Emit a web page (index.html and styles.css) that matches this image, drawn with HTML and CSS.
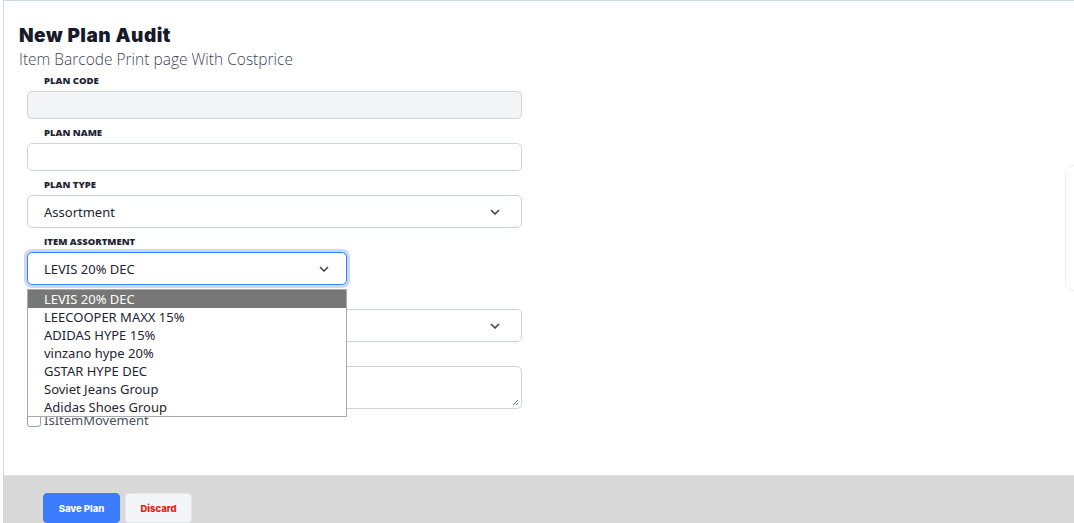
FILE: index.html
```html
<!DOCTYPE html>
<html>
<head>
<meta charset="utf-8">
<link rel="stylesheet" href="styles.css">
</head>
<body>
<div class="page">
  <div class="content">
    <h1 class="title">New Plan Audit</h1>
    <p class="subtitle">Item Barcode Print page With Costprice</p>
    <div class="form">
      <div class="field">
        <label class="label">PLAN CODE</label>
        <div class="input disabled"></div>
      </div>
      <div class="field">
        <label class="label">PLAN NAME</label>
        <div class="input"></div>
      </div>
      <div class="field">
        <label class="label">PLAN TYPE</label>
        <div class="select"><span>Assortment</span>
          <svg class="chev" width="10" height="6" viewBox="0 0 10 6"><path d="M1 1l4 4 4-4" fill="none" stroke="#374151" stroke-width="1.5"/></svg>
        </div>
      </div>
      <div class="field">
        <label class="label">ITEM ASSORTMENT</label>
        <div class="select focused"><span>LEVIS 20% DEC</span>
          <svg class="chev" width="10" height="6" viewBox="0 0 10 6"><path d="M1 1l4 4 4-4" fill="none" stroke="#374151" stroke-width="1.5"/></svg>
        </div>
        <ul class="dropdown">
          <li class="active">LEVIS 20% DEC</li>
          <li>LEECOOPER MAXX 15%</li>
          <li>ADIDAS HYPE 15%</li>
          <li>vinzano hype 20%</li>
          <li>GSTAR HYPE DEC</li>
          <li>Soviet Jeans Group</li>
          <li>Adidas Shoes Group</li>
        </ul>
      </div>
      <div class="field">
        <label class="label hidden-label"></label>
        <div class="select"><span></span>
          <svg class="chev" width="10" height="6" viewBox="0 0 10 6"><path d="M1 1l4 4 4-4" fill="none" stroke="#374151" stroke-width="1.5"/></svg>
        </div>
      </div>
      <div class="field tight">
        <label class="label hidden-label"></label>
        <div class="textarea">
          <svg class="grip" width="7" height="7" viewBox="0 0 7 7"><path d="M6 1L1 6M6 4L4 6" stroke="#6b7280" stroke-width="1"/></svg>
        </div>
      </div>
      <div class="check">
        <span class="box"></span>
        <span class="check-label">IsItemMovement</span>
      </div>
    </div>
  </div>
  <div class="footer">
    <button class="btn primary">Save Plan</button>
    <button class="btn secondary">Discard</button>
  </div>
  <div class="side-tab"></div>
</div>
</body>
</html>
```

FILE: styles.css
```css
* { box-sizing: border-box; }
html, body { margin: 0; padding: 0; background: #fff; }
body { width: 1074px; height: 523px; overflow: hidden; }
.page {
  position: relative;
  margin-left: 3px;
  height: 523px;
  border-top: 1px solid #cfd5e1;
  border-left: 1px solid #cfd5e1;
  display: flex;
  flex-direction: column;
}
.content {
  height: 475px;
  padding: 22px 0 0 15px;
}
.title {
  margin: 0;
  font-family: "Inter", sans-serif;
  font-weight: 900;
  font-size: 19px;
  letter-spacing: 0.5px;
  line-height: 26px;
  color: #171a2b;
}
.subtitle {
  margin: 0;
  font-family: "Open Sans", sans-serif;
  font-weight: 300;
  font-size: 15.5px;
  line-height: 20px;
  color: #3f4454;
}
.form {
  width: 495px;
  margin-left: 8px;
  margin-top: 6px;
}
.field { position: relative; margin-bottom: 8px; }
.field.tight { margin-bottom: 4px; }
.label {
  display: block;
  height: 12px;
  padding-left: 17px;
  font-family: "Open Sans", sans-serif;
  font-weight: 800;
  font-size: 9.5px;
  line-height: 12px;
  color: #1f2433;
  margin-bottom: 4px;
}
.input {
  height: 28px;
  border: 1px solid #cfd3dc;
  border-radius: 5px;
  background: #fff;
}
.input.disabled { background: #f3f4f6; }
.select {
  height: 33px;
  border: 1px solid #cfd3dc;
  border-radius: 5px;
  background: #fff;
  display: flex;
  align-items: center;
  justify-content: space-between;
  padding: 0 21px 0 16px;
  font-family: "Noto Sans", sans-serif;
  font-size: 13px;
  color: #1f2433;
}
.select.focused {
  width: 320px;
  border-color: #3b82f6;
  box-shadow: 0 0 0 3px #c7d9fb;
  padding-right: 17px;
}
.chev { display: block; }
.dropdown {
  position: absolute;
  top: 53px;
  left: 0;
  width: 320px;
  margin: 0;
  padding: 0;
  list-style: none;
  background: #fff;
  border: 1px solid #a9a9a9;
  z-index: 5;
  font-family: "Noto Sans", sans-serif;
  font-size: 13px;
  color: #1f2433;
}
.dropdown li {
  height: 18px;
  line-height: 18px;
  padding-left: 16px;
}
.dropdown li.active { background: #777777; color: #fff; }
.textarea {
  position: relative;
  height: 43px;
  border: 1px solid #cfd3dc;
  border-radius: 5px;
  background: #fff;
}
.grip { position: absolute; right: 2px; bottom: 2px; }
.check {
  display: flex;
  align-items: center;
  gap: 3px;
  height: 14px;
}
.box {
  width: 14px;
  height: 14px;
  border: 1px solid #9ca3af;
  border-radius: 3px;
  background: #fff;
}
.check-label {
  font-family: "Noto Sans", sans-serif;
  font-size: 13px;
  color: #4b5060;
}
.footer {
  flex: 1;
  background: #d9d9d9;
  border-top: 1px solid #e2e2e2;
  padding: 17px 0 0 39px;
  display: flex;
  gap: 5px;
  align-items: flex-start;
}
.btn {
  height: 30px;
  border-radius: 4px;
  font-family: "Inter", sans-serif;
  font-weight: 800;
  font-size: 9.5px;
  cursor: pointer;
}
.btn.primary {
  width: 77px;
  background: #3b7cff;
  color: #fff;
  border: 1px solid #3b7cff;
}
.btn.secondary {
  width: 67px;
  background: #f4f5f9;
  color: #e61d0c;
  border: 1px solid #e5e6ea;
}
.side-tab {
  position: absolute;
  left: 1061px;
  top: 164px;
  width: 40px;
  height: 126px;
  border: 1px solid #eceef2;
  border-radius: 8px;
}
```
